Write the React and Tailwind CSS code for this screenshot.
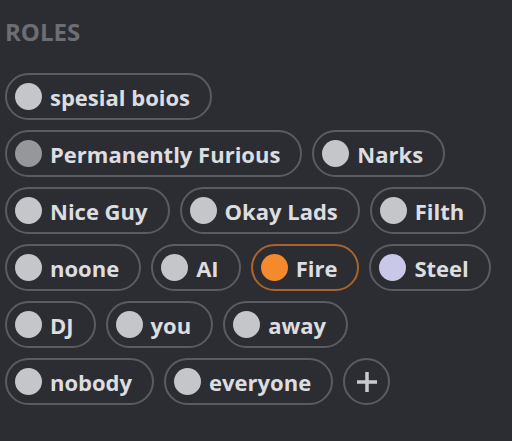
const rows = [
  [{ name: 'spesial boios' }],
  [{ name: 'Permanently Furious', dot: 'bg-[#96979b]' }, { name: 'Narks' }],
  [{ name: 'Nice Guy' }, { name: 'Okay Lads' }, { name: 'Filth' }],
  [{ name: 'noone' }, { name: 'AI' }, { name: 'Fire', dot: 'bg-[#f48a2c]', ring: 'border-[#a9642c]' }, { name: 'Steel', dot: 'bg-[#c9c8e8]' }],
  [{ name: 'DJ' }, { name: 'you' }, { name: 'away' }],
  [{ name: 'nobody' }, { name: 'everyone' }],
];

function Role({ name, dot = 'bg-[#c5c6ca]', ring = 'border-[#5a5c62]' }) {
  return (
    <div className={`flex items-center h-[47px] rounded-full border-2 ${ring} pl-[8px] pr-[20px] gap-[8px]`}>
      <span className={`w-[27px] h-[27px] rounded-full ${dot}`} />
      <span className="text-[22px] font-bold text-[#dcdde0] leading-none">{name}</span>
    </div>
  );
}

export default function App() {
  return (
    <div className="w-[512px] h-[441px] bg-[#2c2d32] pl-[5px] pt-[18px] font-['Open_Sans',sans-serif]">
      <h2 className="text-[24px] font-bold text-[#6c6e74] leading-[28px] mb-[27px]">ROLES</h2>
      <div className="flex flex-col gap-[10px]">
        {rows.map((row, i) => (
          <div key={i} className="flex gap-[10px]">
            {row.map((r) => (
              <Role key={r.name} {...r} />
            ))}
            {i === rows.length - 1 && (
              <button className="w-[47px] h-[47px] rounded-full border-2 border-[#5a5c62] flex items-center justify-center">
                <svg width="22" height="22" viewBox="0 0 22 22" className="text-[#c9cacd]">
                  <path d="M11 1v20M1 11h20" stroke="currentColor" strokeWidth="3.5" />
                </svg>
              </button>
            )}
          </div>
        ))}
      </div>
    </div>
  );
}
